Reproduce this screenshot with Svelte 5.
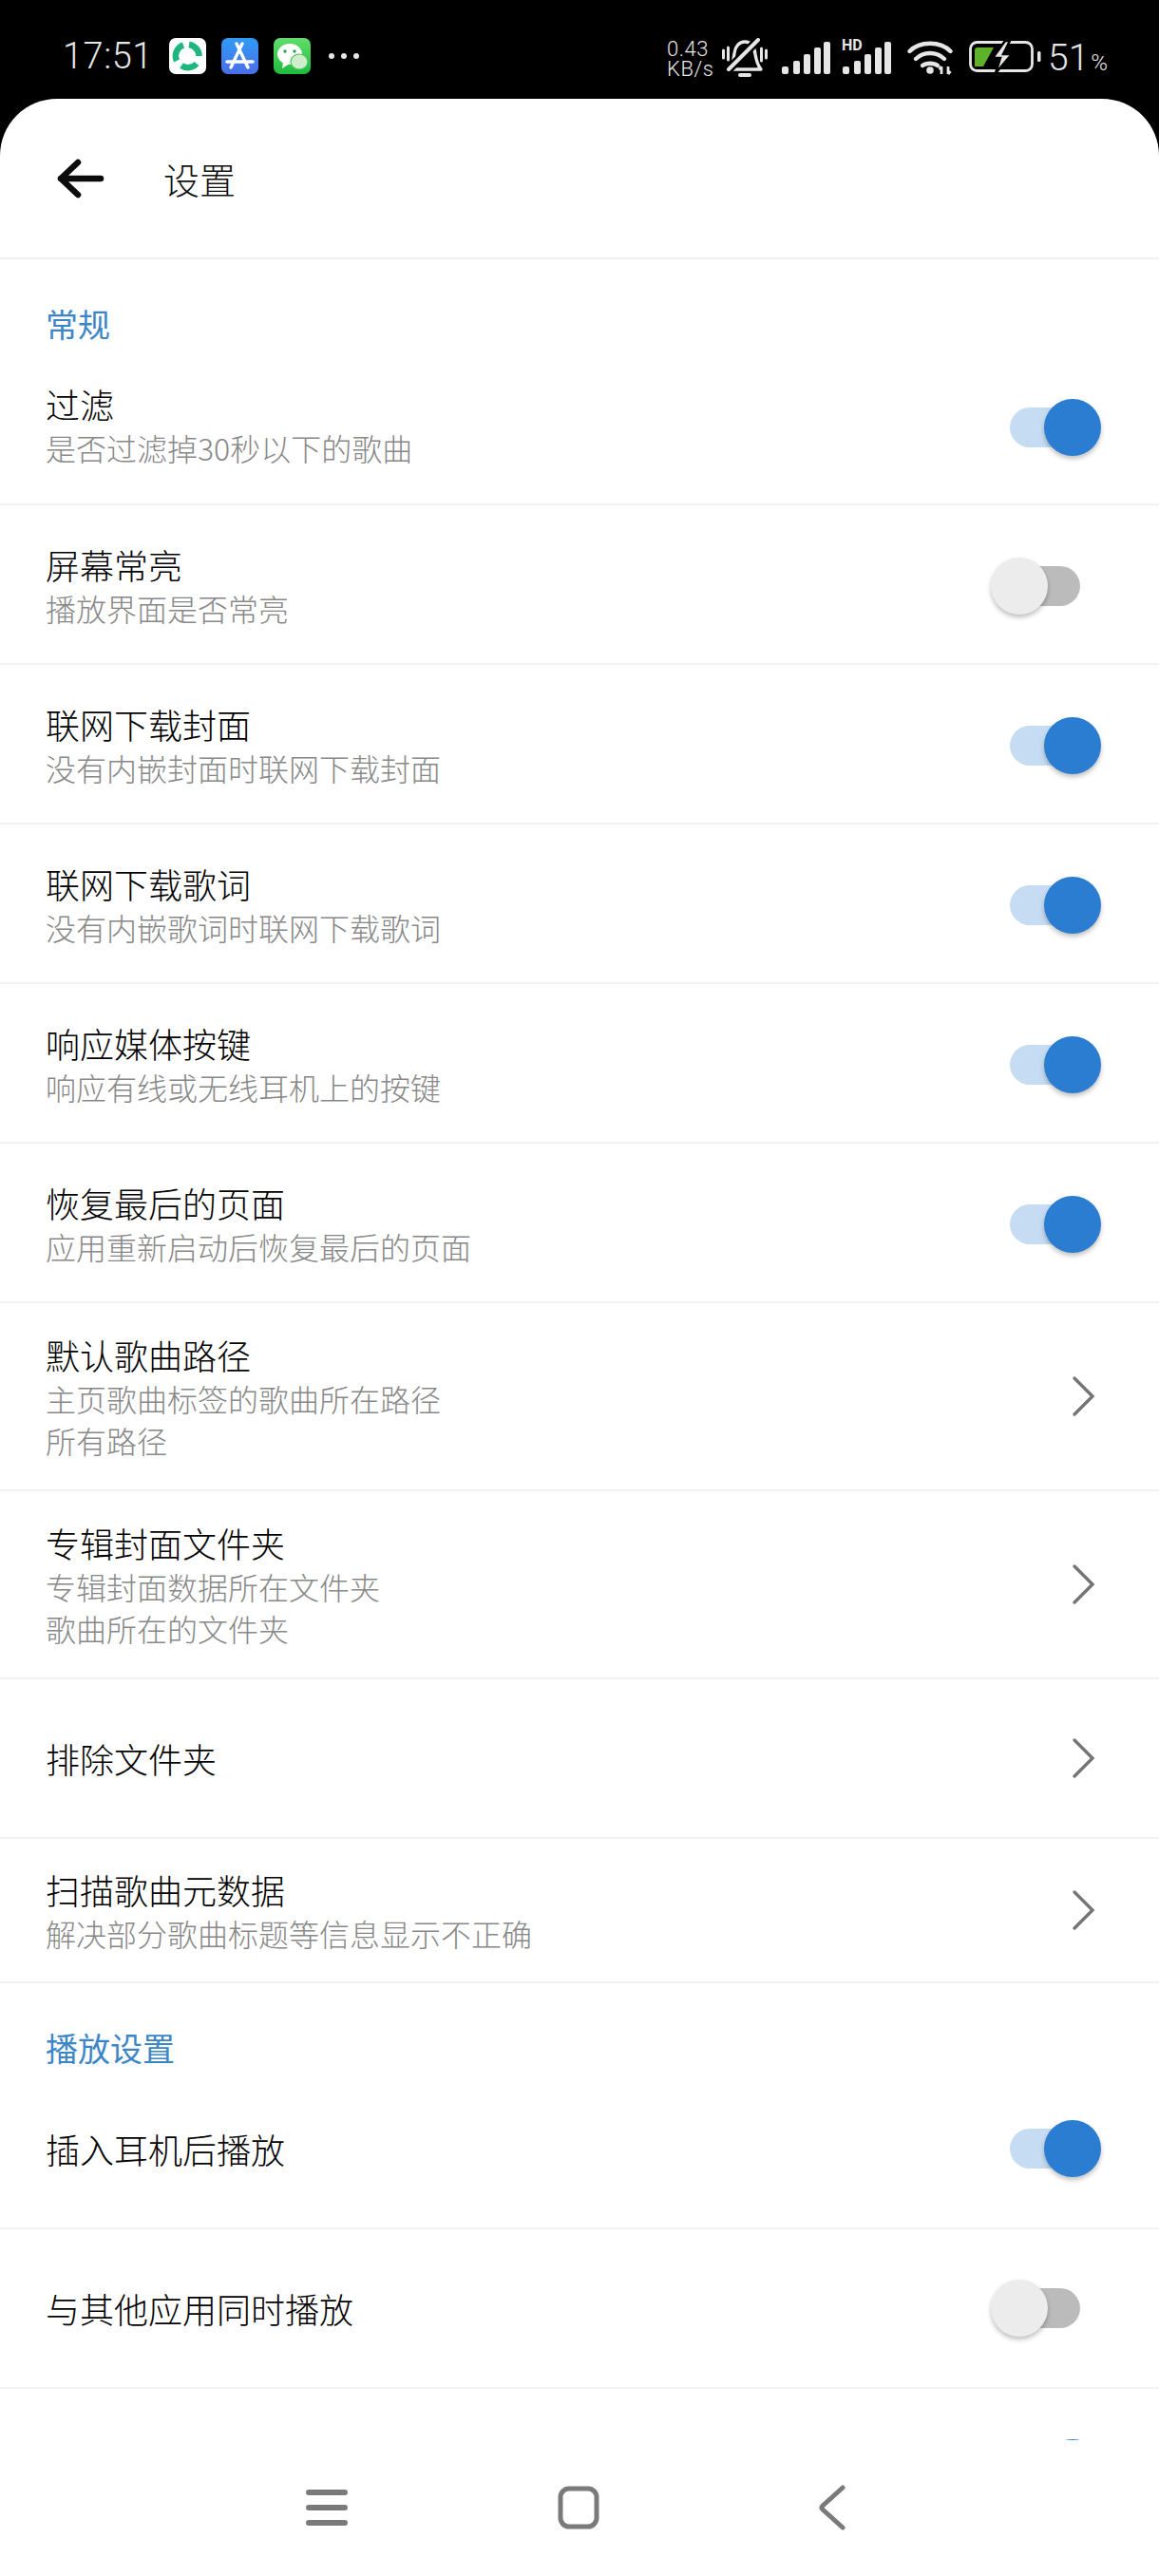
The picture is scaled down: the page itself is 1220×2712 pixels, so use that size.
<script>
  const general = [
    { t: '过滤', s: ['是否过滤掉30秒以下的歌曲'], on: true, cls: 'first' },
    { t: '屏幕常亮', s: ['播放界面是否常亮'], on: false, cls: 'two' },
    { t: '联网下载封面', s: ['没有内嵌封面时联网下载封面'], on: true, cls: 'two' },
    { t: '联网下载歌词', s: ['没有内嵌歌词时联网下载歌词'], on: true, cls: 'two' },
    { t: '响应媒体按键', s: ['响应有线或无线耳机上的按键'], on: true, cls: 'two' },
    { t: '恢复最后的页面', s: ['应用重新启动后恢复最后的页面'], on: true, cls: 'two' },
    { t: '默认歌曲路径', s: ['主页歌曲标签的歌曲所在路径', '所有路径'], arrow: true, cls: 'tall' },
    { t: '专辑封面文件夹', s: ['专辑封面数据所在文件夹', '歌曲所在的文件夹'], arrow: true, cls: 'tall' },
    { t: '排除文件夹', s: [], arrow: true },
    { t: '扫描歌曲元数据', s: ['解决部分歌曲标题等信息显示不正确'], arrow: true, cls: 'scan' }
  ];
  const play = [
    { t: '插入耳机后播放', s: [], on: true, cls: 'single' },
    { t: '与其他应用同时播放', s: [], on: false },
    { t: '', s: [], on: true }
  ];
  const bars = [
    { x: 0, h: 8 }, { x: 12, h: 14 }, { x: 23, h: 21 }, { x: 34, h: 28 }, { x: 44, h: 34 }
  ];
</script>

{#snippet row(r)}
  <div class="row {r.cls ?? ''}">
    <div class="text">
      <div class="title">{r.t}</div>
      {#each r.s as line}
        <div class="sub">{line}</div>
      {/each}
    </div>
    {#if r.arrow}
      <svg class="chev" width="28" height="44" viewBox="0 0 28 44"><path d="M4 3 L23 22 L4 41" fill="none" stroke="#757575" stroke-width="3.4" stroke-linecap="round"/></svg>
    {:else}
      <div class="switch" class:on={r.on}><span class="track"></span><span class="knob"></span></div>
    {/if}
  </div>
{/snippet}

{#snippet signal()}
  <svg class="sig" width="51" height="35" viewBox="0 0 51 35">
    {#each bars as b}
      <rect x={b.x} y={35 - b.h} width="7" height={b.h} rx="2" fill="#e6e6e6"/>
    {/each}
  </svg>
{/snippet}

<div class="phone">
  <header class="status">
    <div class="left">
      <span class="time">17:51</span>
      <svg class="app" viewBox="0 0 39 38"><rect width="39" height="38" rx="7" fill="#fff"/><g fill="none" stroke="#1fb57f" stroke-width="6.500"><path d="M8 24 A12 12 0 0 1 15 7.500"/><path d="M21 7 A12 12 0 0 1 31.500 19"/><path d="M29 27 A12 12 0 0 1 13 29"/></g></svg>
      <svg class="app" viewBox="0 0 39 38"><defs><linearGradient id="as" x1="0" y1="0" x2="0" y2="1"><stop offset="0" stop-color="#2f9bf5"/><stop offset="1" stop-color="#4a6ee8"/></linearGradient></defs><rect width="39" height="38" rx="7" fill="url(#as)"/><path d="M22 6 L10 31 M16 6 L28 31 M6 25 H33" stroke="#fff" stroke-width="3.400" fill="none" stroke-linecap="round"/></svg>
      <svg class="app" viewBox="0 0 39 38"><defs><linearGradient id="wx" x1="0" y1="0" x2="0" y2="1"><stop offset="0" stop-color="#62dd6c"/><stop offset="1" stop-color="#1fbb3e"/></linearGradient></defs><rect width="39" height="38" rx="7" fill="url(#wx)"/><ellipse cx="17" cy="17" rx="13" ry="11" fill="#fff"/><path d="M10 25 L9 32 L17 27Z" fill="#fff"/><ellipse cx="27" cy="25" rx="9" ry="8" fill="#cfeccb" stroke="#3fca58" stroke-width="1.200"/><circle cx="12" cy="14" r="1.700" fill="#2fa34c"/><circle cx="22" cy="14" r="1.700" fill="#2fa34c"/></svg>
      <span class="dots"><i></i><i></i><i></i></span>
    </div>
    <div class="right">
      <div class="speed"><span>0.43</span><span>KB/s</span></div>
      <svg class="bell" width="48" height="44" viewBox="0 0 48 44"><g fill="none" stroke="#e6e6e6" stroke-width="3" stroke-linecap="round"><path d="M1.500 13 V21 M6.500 10 V23 M41.500 11 V24 M46.500 13 V21"/><path d="M9 33 H41 C37 28 36 23 35 17 C34 8 30 4 24 4 C18 4 14 9 13 16 C12 22 12 28 9 33 Z" stroke-width="3.400" stroke-linejoin="round"/><path d="M38 2 L7 33" stroke="#000" stroke-width="9"/><path d="M38 2 L7 33" stroke-width="4"/><path d="M19 39 H29" stroke-width="4"/></g></svg>
      {@render signal()}
      <div class="hd"><span>HD</span>{@render signal()}</div>
      <svg class="wifi" width="48" height="36" viewBox="0 0 48 36"><g fill="none" stroke="#e6e6e6" stroke-width="4.400" stroke-linecap="round"><path d="M2.500 11 C13 0 35 0 45.500 11"/><path d="M9 19 C17 11 31 11 39 19"/><path d="M16 26 C20 23 28 23 32 26"/></g><circle cx="24" cy="31" r="3.800" fill="#e6e6e6"/><path d="M36 27 V35 M33.500 30 L36 27 M43 35 V27 M45.500 32 L43 35" stroke="#e6e6e6" stroke-width="2.800" fill="none"/></svg>
      <svg class="batt" width="76" height="34" viewBox="0 0 76 34"><rect x="1.500" y="1.500" width="65" height="30" rx="7" fill="none" stroke="#e6e6e6" stroke-width="2.800"/><path d="M9 7 H26 L15 27 H6 V10 Q6 7 9 7Z" fill="#5fb12a"/><rect x="72" y="11" width="3.500" height="11" rx="1.500" fill="#e6e6e6"/><path d="M38 0 L25 18 H33 L28 34 L45 14 H36 L43 0Z" fill="#e6e6e6" stroke="#000" stroke-width="2.500"/></svg>
      <span class="pct">51<small>%</small></span>
    </div>
  </header>

  <main class="sheet">
    <div class="topbar">
      <svg class="back" width="52" height="44" viewBox="0 0 52 44"><path d="M24 5 L6 22 L24 39 M6 22 H48" fill="none" stroke="#0c0c0c" stroke-width="6.500" stroke-linecap="round" stroke-linejoin="round"/></svg>
      <span class="page">设置</span>
    </div>

    <div class="section">常规</div>
    {#each general as r}{@render row(r)}{/each}
    <div class="section">播放设置</div>
    {#each play as r}{@render row(r)}{/each}

    <nav class="nav">
      <svg class="n-menu" width="44" height="40" viewBox="0 0 44 40"><path d="M3 4 H41 M3 20 H41 M3 36 H41" stroke="#7a7a7a" stroke-width="6" stroke-linecap="round"/></svg>
      <svg class="n-home" width="44" height="46" viewBox="0 0 44 46"><rect x="3" y="3" width="38" height="40" rx="9" fill="none" stroke="#7a7a7a" stroke-width="5"/></svg>
      <svg class="n-back" width="30" height="48" viewBox="0 0 30 48"><path d="M26 3 L5 22 Q3 24 5 26 L26 45" fill="none" stroke="#7a7a7a" stroke-width="5" stroke-linecap="round"/></svg>
    </nav>
  </main>
</div>

<style>
  :global(body) { margin: 0; background: #000; }
  .phone {
    width: 1220px; height: 2712px; background: #000; overflow: hidden;
    font-family: "Noto Sans CJK SC", "Noto Sans", sans-serif; display: flex; flex-direction: column;
  }
  .status { height: 104px; flex: none; display: flex; justify-content: space-between; padding: 40px 57px 0 66px; box-sizing: border-box; color: #e6e6e6; }
  .left, .right { display: flex; align-items: flex-start; }
  .time { font: 300 38px/38px Roboto, sans-serif; letter-spacing: .5px; width: 112px; }
  .app { width: 39px; height: 38px; margin-right: 16px; }
  .dots { display: flex; gap: 7px; margin: 16px 0 0 3px; }
  .dots i { width: 6px; height: 6px; border-radius: 50%; background: #e6e6e6; }
  .speed { display: flex; flex-direction: column; font: 300 22px/21px Roboto, sans-serif; letter-spacing: .5px; margin: 1px 12px 0 0; width: 46px; white-space: nowrap; }
  .bell { margin-right: 15px; flex: none; }
  .sig { display: block; margin-top: 3px; flex: none; }
  .right > .sig { margin-right: 12px; }
  .hd { position: relative; width: 52px; margin-right: 17px; padding-left: 1px; box-sizing: border-box; }
  .hd span { position: absolute; top: 0; left: 0; font: 700 16px/16px Roboto, sans-serif; background: #000; padding-right: 2px; }
  .wifi { margin: 3px 17px 0 0; flex: none; }
  .batt { margin: 3px 7px 0 0; flex: none; }
  .pct { font: 300 39px/42px Roboto, sans-serif; width: 60px; white-space: nowrap; }
  .pct small { font-size: 24px; margin-left: 2px; }

  .sheet { flex: 1; min-height: 0; background: #fff; border-radius: 60px 60px 0 0; display: flex; flex-direction: column; position: relative; overflow: hidden; }
  .topbar { height: 169px; flex: none; box-sizing: border-box; border-bottom: 2px solid #f2f2f2; display: flex; align-items: center; padding: 0 0 0 58px; }
  .back { margin-right: 62px; flex: none; }
  .page { font-size: 38px; color: #111; font-weight: 300; }
  .section { height: 113px; flex: none; box-sizing: border-box; padding: 44px 0 0 48px; font-size: 34px; line-height: 48px; color: #3d86c6; }

  .row { height: 168px; flex: none; box-sizing: border-box; border-bottom: 2px solid #f2f2f2; padding: 0 59px 0 48px; display: flex; justify-content: space-between; align-items: center; }
  .row.first { height: 146px; align-items: flex-start; }
  .row.single { height: 146px; align-items: flex-start; }
  .row.tall { height: 198px; }
  .row.scan { height: 152px; }
  .title { font-size: 36px; line-height: 47px; color: #000; font-weight: 300; white-space: nowrap; }
  .sub { font-size: 32px; line-height: 44px; color: #888; font-weight: 300; white-space: nowrap; }
  .first .text { padding-top: 16px; }
  .first .switch { margin-top: 34px; }
  .single .text { padding-top: 38px; }
  .single .switch { margin-top: 31px; }
  .two .text { padding-top: 3px; }
  .two .switch { margin-top: 3px; }
  .switch { position: relative; width: 96px; height: 60px; flex: none; }
  .track { position: absolute; left: 0; top: 9px; width: 72px; height: 42px; border-radius: 21px; background: #bbb; }
  .knob { position: absolute; left: -22px; top: 0; width: 60px; height: 60px; border-radius: 50%; background: #ececec; box-shadow: 0 3px 5px rgba(0,0,0,.25); }
  .switch.on .track { left: -2px; background: #c5dcf2; }
  .switch.on .knob { left: 34px; background: #2a7dd1; }
  .chev { margin-right: 6px; flex: none; }
  .nav { position: absolute; left: 0; right: 0; bottom: 0; height: 143px; background: #fff; display: flex; align-items: flex-start; gap: 221px; padding: 49px 0 0 322px; box-sizing: border-box; }
  .n-menu { margin-top: 2px; }
  .n-home { margin-top: -1px; }
  .n-back { margin-left: 9px; margin-top: -2px; }
</style>
